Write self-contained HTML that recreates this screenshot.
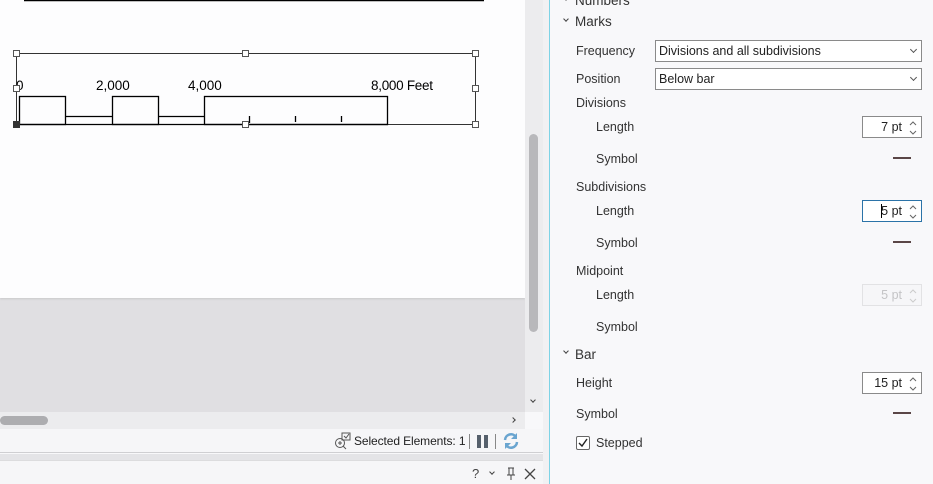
<!DOCTYPE html>
<html><head><meta charset="utf-8"><style>
*{margin:0;padding:0;box-sizing:border-box}
body{width:933px;height:484px;overflow:hidden;position:relative;background:#f8f8fa;font-family:"Liberation Sans",sans-serif;color:#262626}
.a{position:absolute}
.lbl{position:absolute;font-size:12.5px;color:#333;margin-top:1px}
.hd{position:absolute;font-size:13.5px;color:#333;margin-top:1px}
.dd{position:absolute;left:655px;width:267px;height:22px;border:1px solid #8a8a8a;background:#fff;font-size:12.5px;padding:3px 0 0 3px;color:#222}
.dd:after{content:"";position:absolute;right:5px;top:6px;width:4px;height:4px;border-right:1px solid #555;border-bottom:1px solid #555;transform:rotate(45deg)}
.sp{position:absolute;left:862px;width:60px;height:22px;border:1px solid #8a8a8a;background:#fff;font-size:12.5px;text-align:right;padding:3px 19px 0 0;color:#222}
.sp svg{position:absolute;right:3px;top:2px}
.sym{position:absolute;left:893px;width:18px;height:2px;background:#5a4646}
.chev{position:absolute;width:5px;height:5px;border-right:1.5px solid #444;border-bottom:1.5px solid #444;transform:rotate(45deg)}
</style></head><body>
<div class="a" style="left:0;top:0;width:525px;height:412px;background:#e0dfe2"></div>
<div class="a" style="left:0;top:0;width:525px;height:298px;background:#fdfdfe;box-shadow:0 1px 2px #c8c8ca"></div>
<svg class="a" style="left:0;top:0" width="525" height="298">
<line x1="24" y1="0.5" x2="484" y2="0.5" stroke="#000" stroke-width="1.5"/>
<rect x="16.5" y="53.5" width="459" height="71" fill="none" stroke="#333" stroke-width="1"/>
<g fill="none" stroke="#000" stroke-width="1.3">
<rect x="19.5" y="96.5" width="46" height="28"/>
<rect x="112.5" y="96.5" width="46" height="28"/>
<rect x="204.5" y="96.5" width="183" height="28"/>
<path d="M66 116.5H112M158 116.5H204M19 124.5H388"/>
<path d="M249.5 116V123M295.5 116V122M341.5 116V122"/>
</g>
<g font-family="Liberation Sans" font-size="13.5" fill="#000">
<text x="16" y="90">0</text><text x="96" y="90">2,000</text><text x="188" y="90">4,000</text><text x="371" y="90" textLength="62">8,000 Feet</text>
</g>
<g fill="#fff" stroke="#555" stroke-width="1">
<rect x="13.5" y="50.5" width="6" height="6"/><rect x="242.5" y="50.5" width="6" height="6"/><rect x="472.5" y="50.5" width="6" height="6"/>
<rect x="13.5" y="85.5" width="6" height="6"/><rect x="472.5" y="85.5" width="6" height="6"/>
<rect x="242.5" y="121.5" width="6" height="6"/><rect x="472.5" y="121.5" width="6" height="6"/>
</g>
<rect x="13" y="121" width="7" height="7" fill="#333"/>
</svg>
<div class="a" style="left:525px;top:0;width:18px;height:412px;background:#ececee"></div>
<div class="a" style="left:529px;top:134px;width:9px;height:198px;border-radius:5px;background:#b8b8bb"></div>
<div class="chev" style="left:531px;top:398px;width:4px;height:4px;border-width:1px"></div>
<div class="a" style="left:543px;top:0;width:6px;height:484px;background:#f1f1f3"></div>
<div class="a" style="left:0;top:412px;width:525px;height:17px;background:#ececee"></div>
<div class="a" style="left:0;top:416px;width:48px;height:9px;border-radius:5px;background:#adadb0"></div>
<div class="chev" style="left:511px;top:418px;width:4px;height:4px;border-width:1px;transform:rotate(-45deg)"></div>
<div class="a" style="left:0;top:429px;width:543px;height:24px;background:#f6f6f8;border-bottom:1px solid #cfcfd2"></div>
<svg class="a" style="left:333px;top:432px" width="20" height="18"><circle cx="7" cy="11" r="4.5" fill="none" stroke="#555"/><path d="M5 11h4M7 9v4M10 14l3 3" stroke="#555"/><rect x="9" y="1" width="8" height="7" fill="none" stroke="#555"/><path d="M11 4l2 2 3-4" stroke="#555" fill="none"/></svg>
<div class="a" style="left:354px;top:434px;font-size:12px;color:#222;letter-spacing:-0.1px">Selected Elements: 1</div>
<div class="a" style="left:469px;top:434px;width:1px;height:15px;background:#888"></div>
<div class="a" style="left:477px;top:435px;width:4px;height:13px;background:#56606c"></div>
<div class="a" style="left:484px;top:435px;width:4px;height:13px;background:#56606c"></div>
<div class="a" style="left:495px;top:434px;width:1px;height:15px;background:#888"></div>
<svg class="a" style="left:502px;top:432px" width="18" height="18"><path d="M3 8a6 6 0 0 1 11-3M15 10a6 6 0 0 1-11 3" fill="none" stroke="#6aa5d0" stroke-width="2.5"/><path d="M15 1v6h-6z M3 17v-6h6z" fill="#6aa5d0"/></svg>
<div class="a" style="left:0;top:454px;width:543px;height:6px;background:#e4e4e7"></div>
<div class="a" style="left:0;top:460px;width:543px;height:24px;background:#f6f6f8;border-top:1px solid #dcdcde"></div>
<div class="a" style="left:472px;top:466px;font-size:13px;color:#444">?</div>
<div class="chev" style="left:490px;top:470px;width:4px;height:4px;border-width:1px"></div>
<svg class="a" style="left:505px;top:467px" width="12" height="14"><path d="M3 1h6M4 1v7M8 1v7M2 8h8M6 8v5" stroke="#444" fill="none"/></svg>
<svg class="a" style="left:524px;top:468px" width="12" height="12"><path d="M1 1l10 10M11 1L1 11" stroke="#444" stroke-width="1.3"/></svg>
<div class="a" style="left:549px;top:0;width:384px;height:484px;background:#f8f8fa;border-left:1px solid #7dd3e6"></div>
<div class="chev" style="left:564px;top:-4px;transform:rotate(-45deg);width:4px;height:4px"></div>
<div class="hd" style="left:575px;top:-8px">Numbers</div>
<div class="chev" style="left:564px;top:17px;width:4px;height:4px"></div>
<div class="hd" style="left:575px;top:13px">Marks</div>
<div class="lbl" style="left:576px;top:43px">Frequency</div>
<div class="dd" style="top:40px">Divisions and all subdivisions</div>
<div class="lbl" style="left:576px;top:71px">Position</div>
<div class="dd" style="top:68px">Below bar</div>
<div class="lbl" style="left:576px;top:95px">Divisions</div>
<div class="lbl" style="left:596px;top:119px">Length</div>
<div class="sp" style="top:116px">7 pt<svg width="10" height="18"><path d="M2 6l3-3 3 3M2 12l3 3 3-3" stroke="#666" fill="none"/></svg></div>
<div class="lbl" style="left:596px;top:151px">Symbol</div>
<div class="sym" style="top:157px"></div>
<div class="lbl" style="left:576px;top:179px">Subdivisions</div>
<div class="lbl" style="left:596px;top:203px">Length</div>
<div class="sp" style="top:200px;border-color:#2b73a8">5 pt<svg width="10" height="18"><path d="M2 6l3-3 3 3M2 12l3 3 3-3" stroke="#666" fill="none"/></svg><span class="a" style="left:18px;top:3px;width:1px;height:14px;background:#000"></span></div>
<div class="lbl" style="left:596px;top:235px">Symbol</div>
<div class="sym" style="top:241px"></div>
<div class="lbl" style="left:576px;top:263px">Midpoint</div>
<div class="lbl" style="left:596px;top:287px">Length</div>
<div class="sp" style="top:284px;border-color:#e2e2e4;background:#f6f6f8;color:#c4c4c6">5 pt<svg width="10" height="18"><path d="M2 6l3-3 3 3M2 12l3 3 3-3" stroke="#ccc" fill="none"/></svg></div>
<div class="lbl" style="left:596px;top:319px">Symbol</div>
<div class="chev" style="left:564px;top:349px;width:4px;height:4px"></div>
<div class="hd" style="left:575px;top:346px">Bar</div>
<div class="lbl" style="left:576px;top:375px">Height</div>
<div class="sp" style="top:372px">15 pt<svg width="10" height="18"><path d="M2 6l3-3 3 3M2 12l3 3 3-3" stroke="#666" fill="none"/></svg></div>
<div class="lbl" style="left:576px;top:406px">Symbol</div>
<div class="sym" style="top:412px"></div>
<div class="a" style="left:576px;top:436px;width:14px;height:14px;border:1px solid #666;border-radius:2px;background:#fff"></div>
<svg class="a" style="left:577px;top:437px" width="12" height="12"><path d="M2 6l3 3 5-7" stroke="#222" stroke-width="1.4" fill="none"/></svg>
<div class="lbl" style="left:596px;top:435px">Stepped</div>
</body></html>
